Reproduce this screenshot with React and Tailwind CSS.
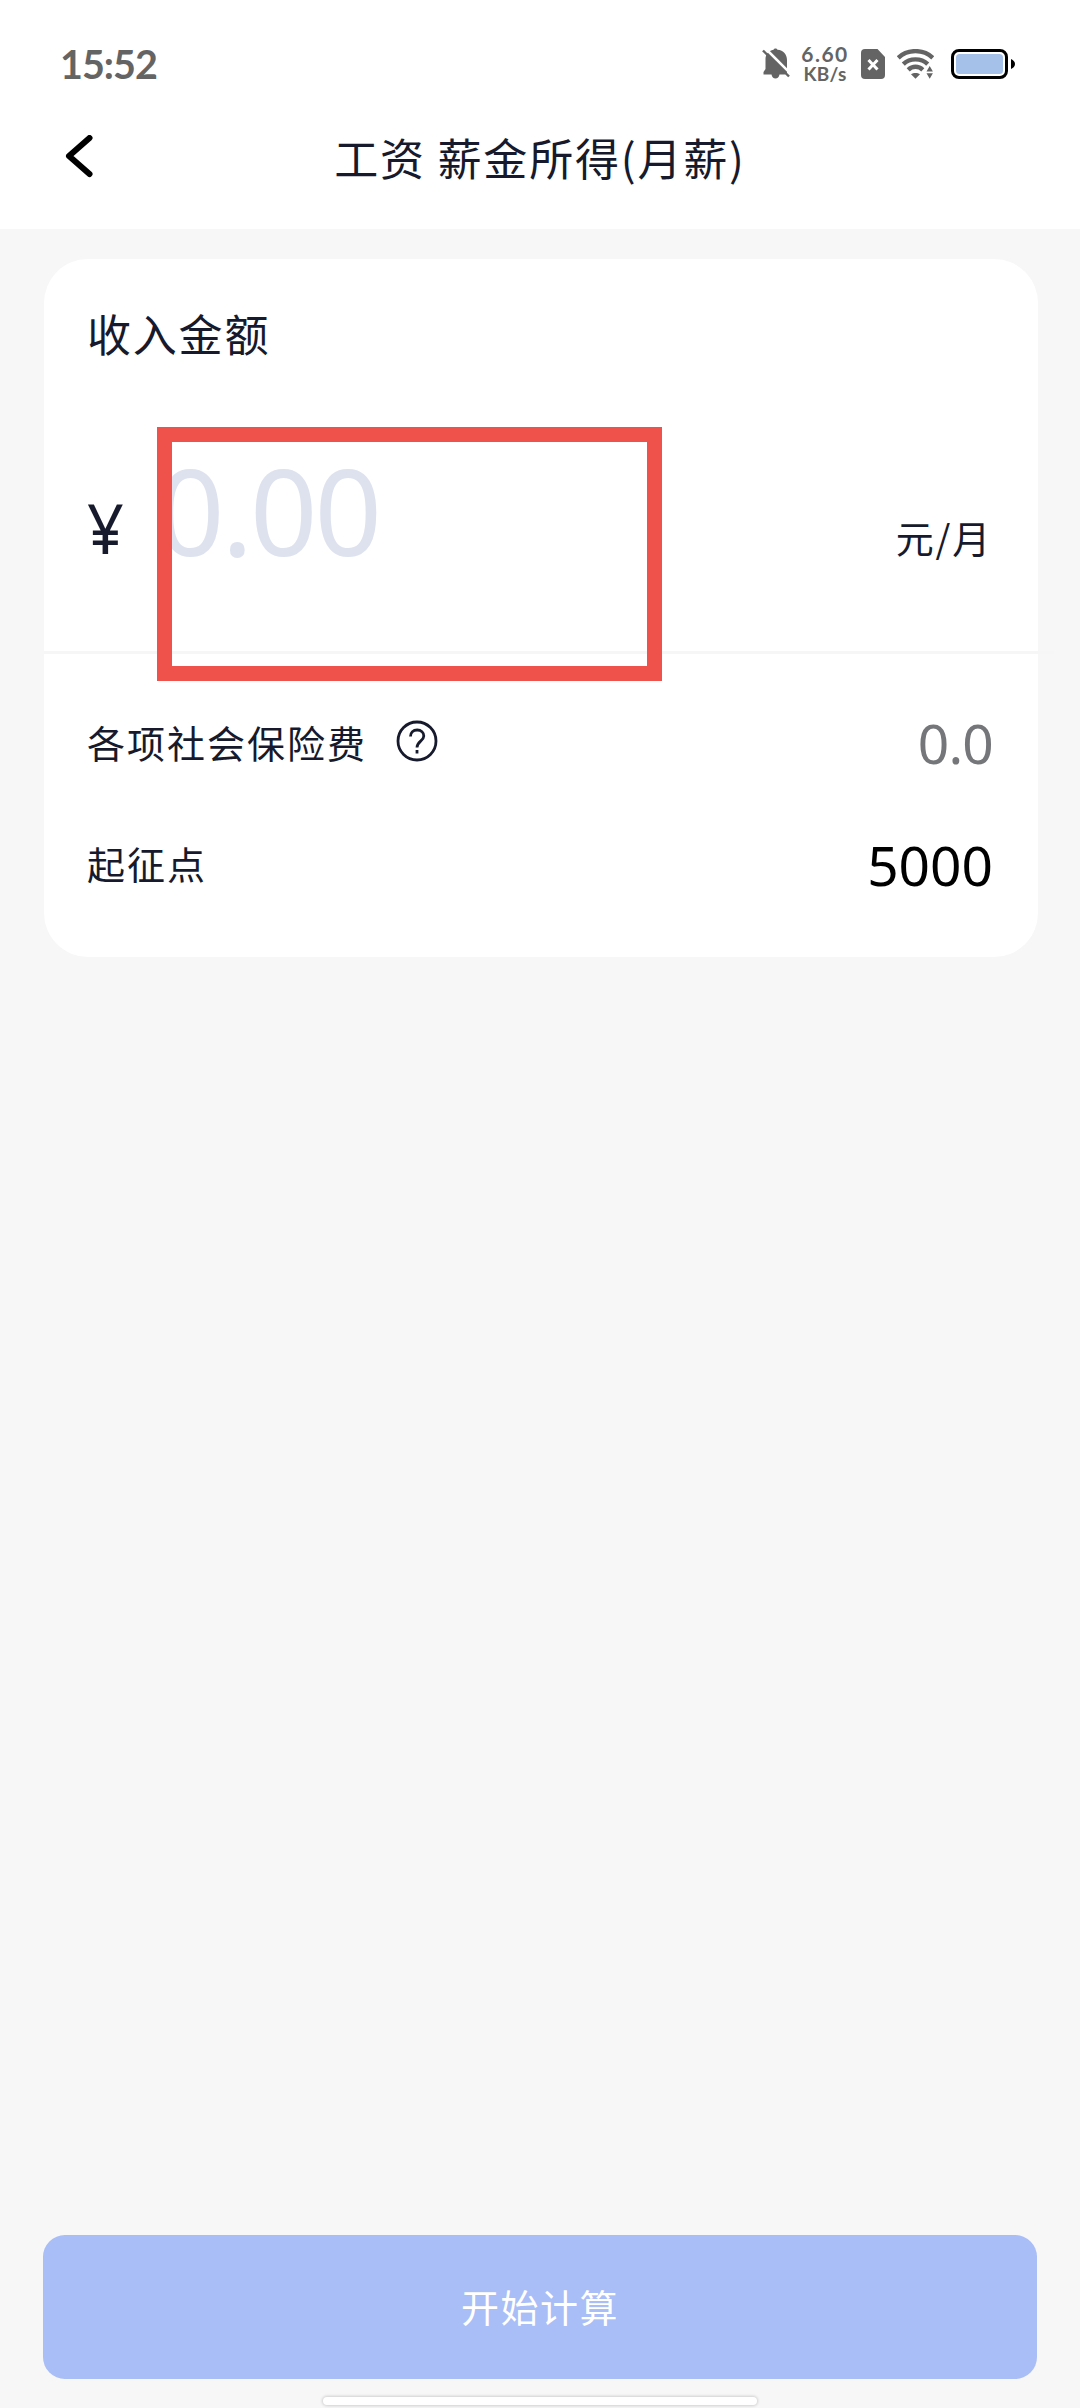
import { useState } from "react";

const BellOffIcon = () => (
  <svg className="w-7 h-8" viewBox="0 0 28 32" fill="#646464">
    <path d="M13.500 0.500c.8 0 1.600.4 2 1.200C21.500 2 25 6.500 25 12v12c0 1.500-1 2.500-2.500 2.500H17.500c-.5 2.400-1.900 4-4 4s-3.500-1.600-4-4H1.500V24L3.500 21V11c0-4.500 3-8.500 8-9.300.4-.8 1.200-1.200 2-1.200z" />
    <path d="M3 0L29 26" stroke="#fff" strokeWidth="2.600" />
    <path d="M1 2.500L27 28.500" stroke="#646464" strokeWidth="2.400" />
  </svg>
);

const SimOffIcon = () => (
  <svg className="w-6 h-[30px]" viewBox="0 0 24 30">
    <path d="M4 0h12.500L24 8v18a4 4 0 0 1-4 4H4a4 4 0 0 1-4-4V4a4 4 0 0 1 4-4z" fill="#646464" />
    <path d="M7.500 11l9 9.500M16.500 11l-9 9.500" stroke="#fff" strokeWidth="3" />
  </svg>
);

const WifiIcon = () => (
  <svg className="w-[37px] h-[30px]" viewBox="0 0 37 30" fill="none" stroke="#646464" strokeWidth="4.400">
    <path d="M1.200 8.800C10.500-.1 26.500-.1 35.800 8.800" />
    <path d="M6.300 15.200c6.600-6.400 17.800-6.400 24.400 0" />
    <path d="M11.200 20.800c4.200-4 10.400-4 14.600 0" />
    <path d="M14 25.300c2.400-1.900 6.600-1.900 9 0l-4.500 4.500z" fill="#646464" stroke="none" />
    <path d="M29.500 22.500l3.200-5.500 3.200 5.500zM29.500 24.300l3.200 5.500 3.200-5.500z" fill="#646464" stroke="none" />
  </svg>
);

const BatteryIcon = () => (
  <svg className="w-16 h-[30px]" viewBox="0 0 64 30">
    <rect x="1.500" y="1.500" width="54" height="27" rx="6.500" fill="#fff" stroke="#000" strokeWidth="3" />
    <rect x="5" y="5" width="47" height="20" rx="3.500" fill="#a6c1e9" />
    <path d="M60 10c2.500 1 4 3 4 5s-1.500 4-4 5z" fill="#000" />
  </svg>
);

const StatusBar = () => (
  <div className="flex items-start justify-between h-[110px] pt-[48px] pl-[60px] pr-[65px]">
    <span className="font-['Lato'] font-bold text-[39.500px] leading-[31px] tracking-[-1px] text-[#646464]">15:52</span>
    <div className="flex items-start">
      <BellOffIcon />
      <div className="flex flex-col items-center w-12 ml-[11px] -mt-[5px] font-['Lato'] font-bold text-[#646464]">
        <span className="text-[21px] leading-[21px] tracking-[1.500px]">6.60</span>
        <span className="text-[19px] leading-[20px] tracking-[0.300px]">KB/s</span>
      </div>
      <div className="ml-[12px] mt-px"><SimOffIcon /></div>
      <div className="ml-[12px] mt-px"><WifiIcon /></div>
      <div className="ml-[17px] mt-px"><BatteryIcon /></div>
    </div>
  </div>
);

const Header = () => (
  <header className="h-[229px] bg-white">
    <StatusBar />
    <div className="flex items-center h-[94px] px-[62px]">
      <button type="button" className="w-10">
        <svg className="w-9 h-11" viewBox="0 0 36 44" fill="none" stroke="#000" strokeWidth="6" strokeLinecap="round" strokeLinejoin="round">
          <path d="M27.500 3L7 21l20.500 18" />
        </svg>
      </button>
      <h1 className="flex-1 text-center text-[44px] leading-[60px] tracking-[1.8px]">工资 薪金所得(月薪)</h1>
      <div className="w-10" />
    </div>
  </header>
);

const HelpIcon = () => (
  <svg className="w-[42px] h-[42px] mb-[3px]" viewBox="0 0 42 42" fill="none" stroke="#161a2c" strokeWidth="2.800">
    <circle cx="21" cy="21" r="19" />
    <path d="M14.500 16.500c0-4 2.800-6.500 6.700-6.500s6.600 2.500 6.600 6c0 5-6.800 5.500-6.800 11.500" />
    <path d="M21 30v3.500" />
  </svg>
);

const App = () => {
  const [amount] = useState("");

  return (
    <div className="flex flex-col w-[1080px] h-[2408px] overflow-hidden bg-[#f7f7f7] text-[#161a2c] font-['Noto_Sans_CJK_SC',sans-serif]">
      <Header />

      <section className="flex flex-col w-[994px] h-[698px] ml-[44px] mt-[30px] bg-white rounded-[44px]">
        <h2 className="h-[153px] pt-[44px] pl-[43px] text-[44px] leading-[60px] tracking-[1.8px]">收入金额</h2>

        {/* Amount */}
        <div className="relative flex items-start h-[239px] pl-[43px] pr-[46px]">
          <span className="w-[70px] pt-[80px] font-['Noto_Sans'] text-[70px] leading-[70px]">
            <span className="inline-block origin-left scale-x-[0.92]">¥</span>
          </span>
          <div className="flex-1 pt-[39px] font-['Noto_Sans'] text-[118px] leading-[120px] tracking-[-3px] text-[#dde2ee]">
            {amount || "0.00"}
          </div>
          <span className="pt-[97px] text-[38px] leading-[56px] tracking-[1.800px]">元/月</span>
          {/* highlighted input area */}
          <div className="absolute left-[113px] top-[15px] w-[505px] h-[254px] border-[15px] border-[#ef524b]" />
        </div>
        <div className="w-[1010px] h-[3px] shrink-0 bg-[#f6f6f6]" />

        {/* Deductions */}
        <div className="flex items-center justify-between h-[176px] pl-[43px] pr-[45px]">
          <div className="flex items-center gap-[29px]">
            <span className="text-[38px] leading-[56px] tracking-[2px]">各项社会保险费</span>
            <HelpIcon />
          </div>
          <span className="pt-[2px] font-['Noto_Sans'] text-[55px] leading-[60px] tracking-[-0.8px] text-[#757679]">0.0</span>
        </div>
        <div className="flex items-center justify-between h-[66px] pl-[43px] pr-[45px]">
          <span className="text-[38px] leading-[56px] tracking-[2px]">起征点</span>
          <span className="pt-[3px] font-['Noto_Sans'] text-[55px] leading-[60px] text-black">5000</span>
        </div>
      </section>

      <button
        type="button"
        className="w-[994px] h-[144px] ml-[43px] mt-auto pb-[3px] rounded-[22px] bg-[#a9bdf6] text-white text-[38px] tracking-[1.500px]"
      >
        开始计算
      </button>
      <div className="w-[434px] h-[8px] mx-auto mt-[18px] mb-[3px] rounded-full bg-white shadow-[0_0_3px_1px_rgba(0,0,0,0.16)]" />
    </div>
  );
};

export default App;
